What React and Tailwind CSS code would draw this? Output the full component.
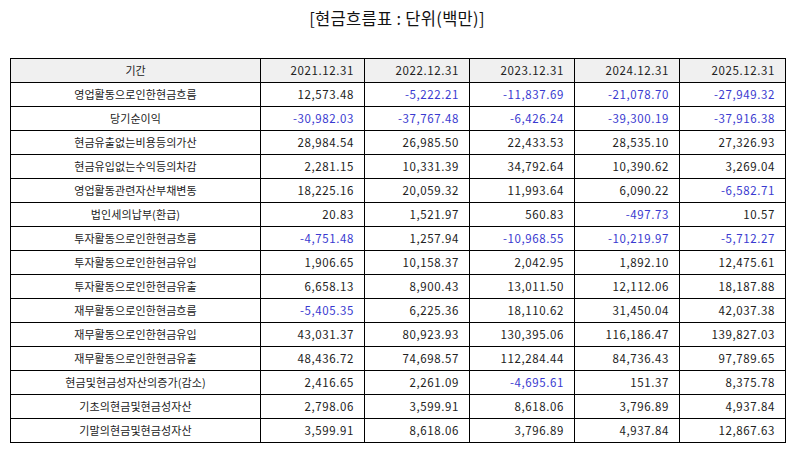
const years = ["2021.12.31", "2022.12.31", "2023.12.31", "2024.12.31", "2025.12.31"];

const rows = [
  ["영업활동으로인한현금흐름", ["12,573.48", "-5,222.21", "-11,837.69", "-21,078.70", "-27,949.32"]],
  ["당기순이익", ["-30,982.03", "-37,767.48", "-6,426.24", "-39,300.19", "-37,916.38"]],
  ["현금유출없는비용등의가산", ["28,984.54", "26,985.50", "22,433.53", "28,535.10", "27,326.93"]],
  ["현금유입없는수익등의차감", ["2,281.15", "10,331.39", "34,792.64", "10,390.62", "3,269.04"]],
  ["영업활동관련자산부채변동", ["18,225.16", "20,059.32", "11,993.64", "6,090.22", "-6,582.71"]],
  ["법인세의납부(환급)", ["20.83", "1,521.97", "560.83", "-497.73", "10.57"]],
  ["투자활동으로인한현금흐름", ["-4,751.48", "1,257.94", "-10,968.55", "-10,219.97", "-5,712.27"]],
  ["투자활동으로인한현금유입", ["1,906.65", "10,158.37", "2,042.95", "1,892.10", "12,475.61"]],
  ["투자활동으로인한현금유출", ["6,658.13", "8,900.43", "13,011.50", "12,112.06", "18,187.88"]],
  ["재무활동으로인한현금흐름", ["-5,405.35", "6,225.36", "18,110.62", "31,450.04", "42,037.38"]],
  ["재무활동으로인한현금유입", ["43,031.37", "80,923.93", "130,395.06", "116,186.47", "139,827.03"]],
  ["재무활동으로인한현금유출", ["48,436.72", "74,698.57", "112,284.44", "84,736.43", "97,789.65"]],
  ["현금및현금성자산의증가(감소)", ["2,416.65", "2,261.09", "-4,695.61", "151.37", "8,375.78"]],
  ["기초의현금및현금성자산", ["2,798.06", "3,599.91", "8,618.06", "3,796.89", "4,937.84"]],
  ["기말의현금및현금성자산", ["3,599.91", "8,618.06", "3,796.89", "4,937.84", "12,867.63"]],
];

export default function App() {
  return (
    <div
      className="w-[794px] h-[452px] bg-white text-[#222] px-[10px]"
      style={{ fontFamily: '"Noto Sans CJK KR", "Noto Sans", sans-serif' }}
    >
      <div className="h-[36px] flex items-center justify-center text-[16.5px] tracking-[0.3px] text-[#111] pt-[1px]">
        [현금흐름표 : 단위(백만)]
      </div>
      <div className="h-[22px]" />
      <table className="table-fixed border-collapse w-[775px] border border-black">
        <colgroup>
          <col className="w-[250px]" />
          <col className="w-[104px]" />
          <col className="w-[105px]" />
          <col className="w-[105px]" />
          <col className="w-[105px]" />
          <col className="w-[106px]" />
        </colgroup>
        <thead>
          <tr className="h-[24px] bg-[#f0f0f0]">
            <th className="border border-black font-normal text-[11px] text-center p-0 leading-none">기간</th>
            {years.map((y) => (
              <th key={y} className="border border-black font-normal text-[11.5px] tracking-[0.6px] text-right pr-[10px] p-0 leading-none">
                {y}
              </th>
            ))}
          </tr>
        </thead>
        <tbody>
          {rows.map(([label, vals]) => (
            <tr key={label} className="h-[24px]">
              <td className="border border-black text-[11px] tracking-[0.1px] text-center p-0 leading-none">{label}</td>
              {vals.map((v, i) => (
                <td
                  key={i}
                  className={
                    "border border-black text-[11.5px] tracking-[0.6px] text-right pr-[10px] p-0 leading-none " +
                    (v.startsWith("-") ? "text-[#3a3ad0]" : "text-[#222]")
                  }
                >
                  {v}
                </td>
              ))}
            </tr>
          ))}
        </tbody>
      </table>
    </div>
  );
}
